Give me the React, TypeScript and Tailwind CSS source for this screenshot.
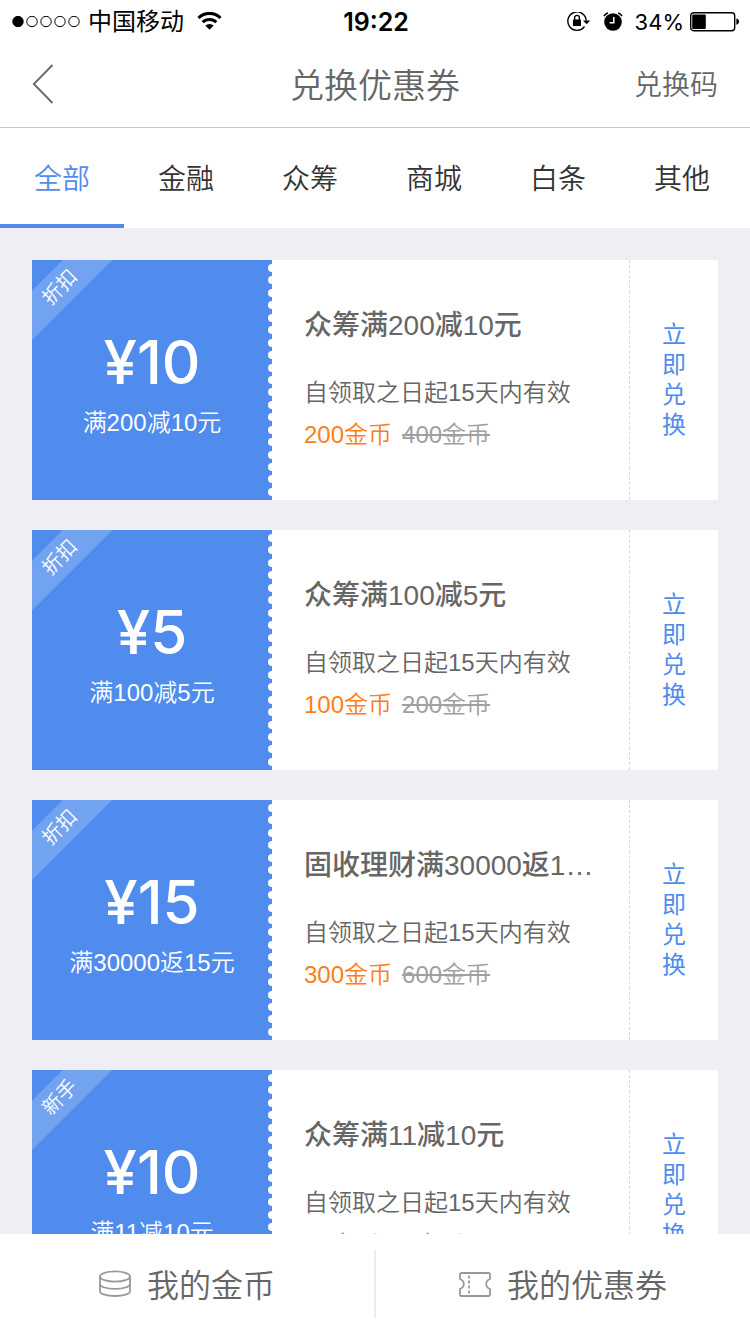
type Coupon = {
  id: number;
  tag: string;
  amount: number;
  rule: string;
  title: string;
  price: number;
  oldPrice: number;
};

const tabs = ["全部", "金融", "众筹", "商城", "白条", "其他"];

const coupons: Coupon[] = [
  { id: 1, tag: "折扣", amount: 10, rule: "满200减10元", title: "众筹满200减10元", price: 200, oldPrice: 400 },
  { id: 2, tag: "折扣", amount: 5, rule: "满100减5元", title: "众筹满100减5元", price: 100, oldPrice: 200 },
  { id: 3, tag: "折扣", amount: 15, rule: "满30000返15元", title: "固收理财满30000返15元", price: 300, oldPrice: 600 },
  { id: 4, tag: "新手", amount: 10, rule: "满11减10元", title: "众筹满11减10元", price: 10, oldPrice: 20 },
];

function StatusBar() {
  return (
    <div className="grid h-10 grid-cols-[1fr_auto_1fr] items-center pt-0.5 pr-[10px] pl-3 font-['Inter','Noto_Sans_CJK_SC',sans-serif] text-2xl leading-10 text-black">
      <div className="flex items-center gap-2">
        <svg className="h-3 w-[68px]" viewBox="0 0 68 12" fill="none" stroke="#000">
          <circle cx="6" cy="5.500" r="5.200" fill="#000" />
          <circle cx="20" cy="5.500" r="5.200" />
          <circle cx="34" cy="5.500" r="5.200" />
          <circle cx="48" cy="5.500" r="5.200" />
          <circle cx="62" cy="5.500" r="5.200" />
        </svg>
        <span>中国移动</span>
        <svg className="ml-1 h-5 w-[26px]" viewBox="0 0 26 20" fill="none" stroke="#000" strokeWidth="3">
          <path d="M2.500 6a15.400 15.400 0 0 1 22 0" />
          <path d="M6.700 10.200a9.600 9.600 0 0 1 13.600 0" />
          <path d="M13.500 17.800l-4.200-4.200a6.200 6.200 0 0 1 8.400 0z" fill="#000" stroke="none" />
        </svg>
      </div>
      <span className="text-[25px] font-semibold">19:22</span>
      <div className="flex items-center justify-end">
        <svg className="h-5 w-6" viewBox="0 0 24 20" fill="none" stroke="#000" strokeWidth="1.400">
          <path d="M17.500 14.500A9.200 9.200 0 1 1 19.200 8.500" />
          <path d="M16 8.500h7.200L19.600 12.200z" fill="#000" stroke="none" />
          <rect x="6" y="7.500" width="8" height="6.500" rx="0.600" fill="#000" stroke="none" />
          <path d="M7.600 8V5.800a2.400 2.400 0 0 1 4.800 0V8" />
        </svg>
        <svg className="ml-3 h-5 w-5" viewBox="0 0 20 20" fill="none" stroke="#000">
          <circle cx="10" cy="10" r="8.800" fill="#000" stroke="none" />
          <path d="M1 4.200a6 6 0 0 1 4-3.200M19 4.200a6 6 0 0 0-4-3.200" strokeWidth="1.600" />
          <path d="M10.800 5v5.800H6.600" stroke="#fff" strokeWidth="1.500" />
        </svg>
        <span className="ml-3 text-[22px]">34%</span>
        <svg className="ml-1.5 h-5 w-[50px]" viewBox="0 0 50 20" fill="none">
          <rect x="0.700" y="0.700" width="44" height="18" rx="3" stroke="#000" strokeWidth="1.400" />
          <rect x="2.200" y="2.400" width="13.600" height="14.600" rx="1" fill="#000" />
          <path d="M46.400 6.400c2 .4 2.600 1.600 2.600 3.200s-.6 2.800-2.600 3.200z" fill="#000" />
        </svg>
      </div>
    </div>
  );
}

function NavBar() {
  return (
    <header className="grid h-22 grid-cols-[1fr_auto_1fr] items-center border-b border-[#c8c8cc] px-8 text-[#666]">
      <button type="button" aria-label="返回" className="justify-self-start">
        <svg className="h-10 w-[22px]" viewBox="0 0 22 40" fill="none" stroke="#666" strokeWidth="1.8">
          <path d="M20.500 1L1.800 20l18.700 19" />
        </svg>
      </button>
      <h1 className="pt-1 text-[34px] leading-[50px] font-[350]">兑换优惠券</h1>
      <a href="#code" className="justify-self-end pt-1 text-[28px] leading-10 font-[350]">兑换码</a>
    </header>
  );
}

function Tabs() {
  return (
    <nav className="grid h-25 grid-cols-6 bg-white pr-1.5">
      {tabs.map((tab, i) => (
        <button
          key={tab}
          type="button"
          className={
            i === 0
              ? "border-b-4 border-[#4f8cee] pt-2 text-[28px] font-[350] text-[#4f8cee]"
              : "border-b-4 border-transparent pt-2 text-[28px] font-[350] text-[#333]"
          }
        >
          {tab}
        </button>
      ))}
    </nav>
  );
}

function CouponCard({ coupon }: { coupon: Coupon }) {
  return (
    <li className="flex h-60 shrink-0 bg-white">
      <div className="relative w-60 shrink-0 overflow-hidden bg-[#4f8cee] pt-18 text-center text-white">
        <span className="absolute top-[10px] -left-8 w-30 -rotate-45 bg-white/20 text-xl leading-[35px] font-[350]">
          {coupon.tag}
        </span>
        <p className="font-['Inter','Noto_Sans_CJK_SC',sans-serif] text-[60px] leading-[60px] font-medium">¥{coupon.amount}</p>
        <p className="mt-4 text-2xl leading-[30px] font-[350]">{coupon.rule}</p>
        {/* perforated edge */}
        <div className="absolute inset-y-0 right-0 flex flex-col justify-between py-1">
          {Array.from({ length: 19 }, (_, i) => (
            <i key={i} className="h-2 w-1 rounded-l-full bg-white" />
          ))}
        </div>
      </div>
      <div className="min-w-0 flex-1 px-8 pt-[46px] text-[#666]">
        <h2 className="truncate text-[28px] leading-10 font-medium">{coupon.title}</h2>
        <p className="mt-[26px] text-2xl leading-[42px] font-[350] whitespace-nowrap">自领取之日起15天内有效</p>
        <p className="flex gap-[10px] text-2xl leading-[42px] font-[350]">
          <span className="text-[#ff7e15]">{coupon.price}金币</span>
          <del className="text-[#a0a0a0]">{coupon.oldPrice}金币</del>
        </p>
      </div>
      <button
        type="button"
        className="flex w-[89px] shrink-0 items-center justify-center border-l border-dashed border-[#d8d8d8] text-2xl leading-[30px] text-[#4f8cee]"
      >
        <span className="w-6 break-all">立即兑换</span>
      </button>
    </li>
  );
}

function BottomBar() {
  return (
    <footer className="flex h-25 shrink-0 items-center bg-white text-[32px] font-[350] text-[#666]">
      <a href="#coins" className="flex flex-1 items-center justify-center gap-4">
        <svg className="h-7 w-8" viewBox="0 0 32 28" fill="none" stroke="#999" strokeWidth="1.8">
          <ellipse cx="16" cy="6.500" rx="15" ry="5.200" />
          <path d="M1 6.500v14.700c0 2.900 6.700 4.800 15 4.800s15-1.900 15-4.800V6.500" />
          <path d="M1 14c0 2.900 6.700 4.800 15 4.800s15-1.900 15-4.800" />
        </svg>
        <span className="pt-1">我的金币</span>
      </a>
      <div className="h-[68px] w-0.5 bg-[#ececee]" />
      <a href="#coupons" className="flex flex-1 items-center justify-center gap-4">
        <svg className="h-7 w-8" viewBox="0 0 32 28" fill="none" stroke="#999" strokeWidth="1.8">
          <path d="M2.400 3h27.200a1.400 1.400 0 0 1 1.400 1.400V9c-2.400 1-3.800 2.800-3.800 5s1.400 4 3.800 5v5.600a1.400 1.400 0 0 1-1.400 1.400H2.400A1.400 1.400 0 0 1 1 24.600V19c2.400-1 3.800-2.800 3.800-5S3.400 10 1 9V4.400A1.400 1.400 0 0 1 2.400 3z" />
          <path d="M10 5.500v18" strokeDasharray="3 2" />
        </svg>
        <span className="pt-1">我的优惠券</span>
      </a>
    </footer>
  );
}

export default function App() {
  return (
    <div className="flex h-screen flex-col bg-[#efeef4] font-['Liberation_Sans','Noto_Sans_CJK_SC',sans-serif]">
      <div className="shrink-0 bg-white">
        <StatusBar />
        <NavBar />
        <Tabs />
      </div>
      <main className="min-h-0 flex-1 overflow-y-auto p-8 [scrollbar-width:none]">
        <ul className="flex flex-col gap-[30px]">
          {coupons.map((coupon) => (
            <CouponCard key={coupon.id} coupon={coupon} />
          ))}
        </ul>
      </main>
      <BottomBar />
    </div>
  );
}
